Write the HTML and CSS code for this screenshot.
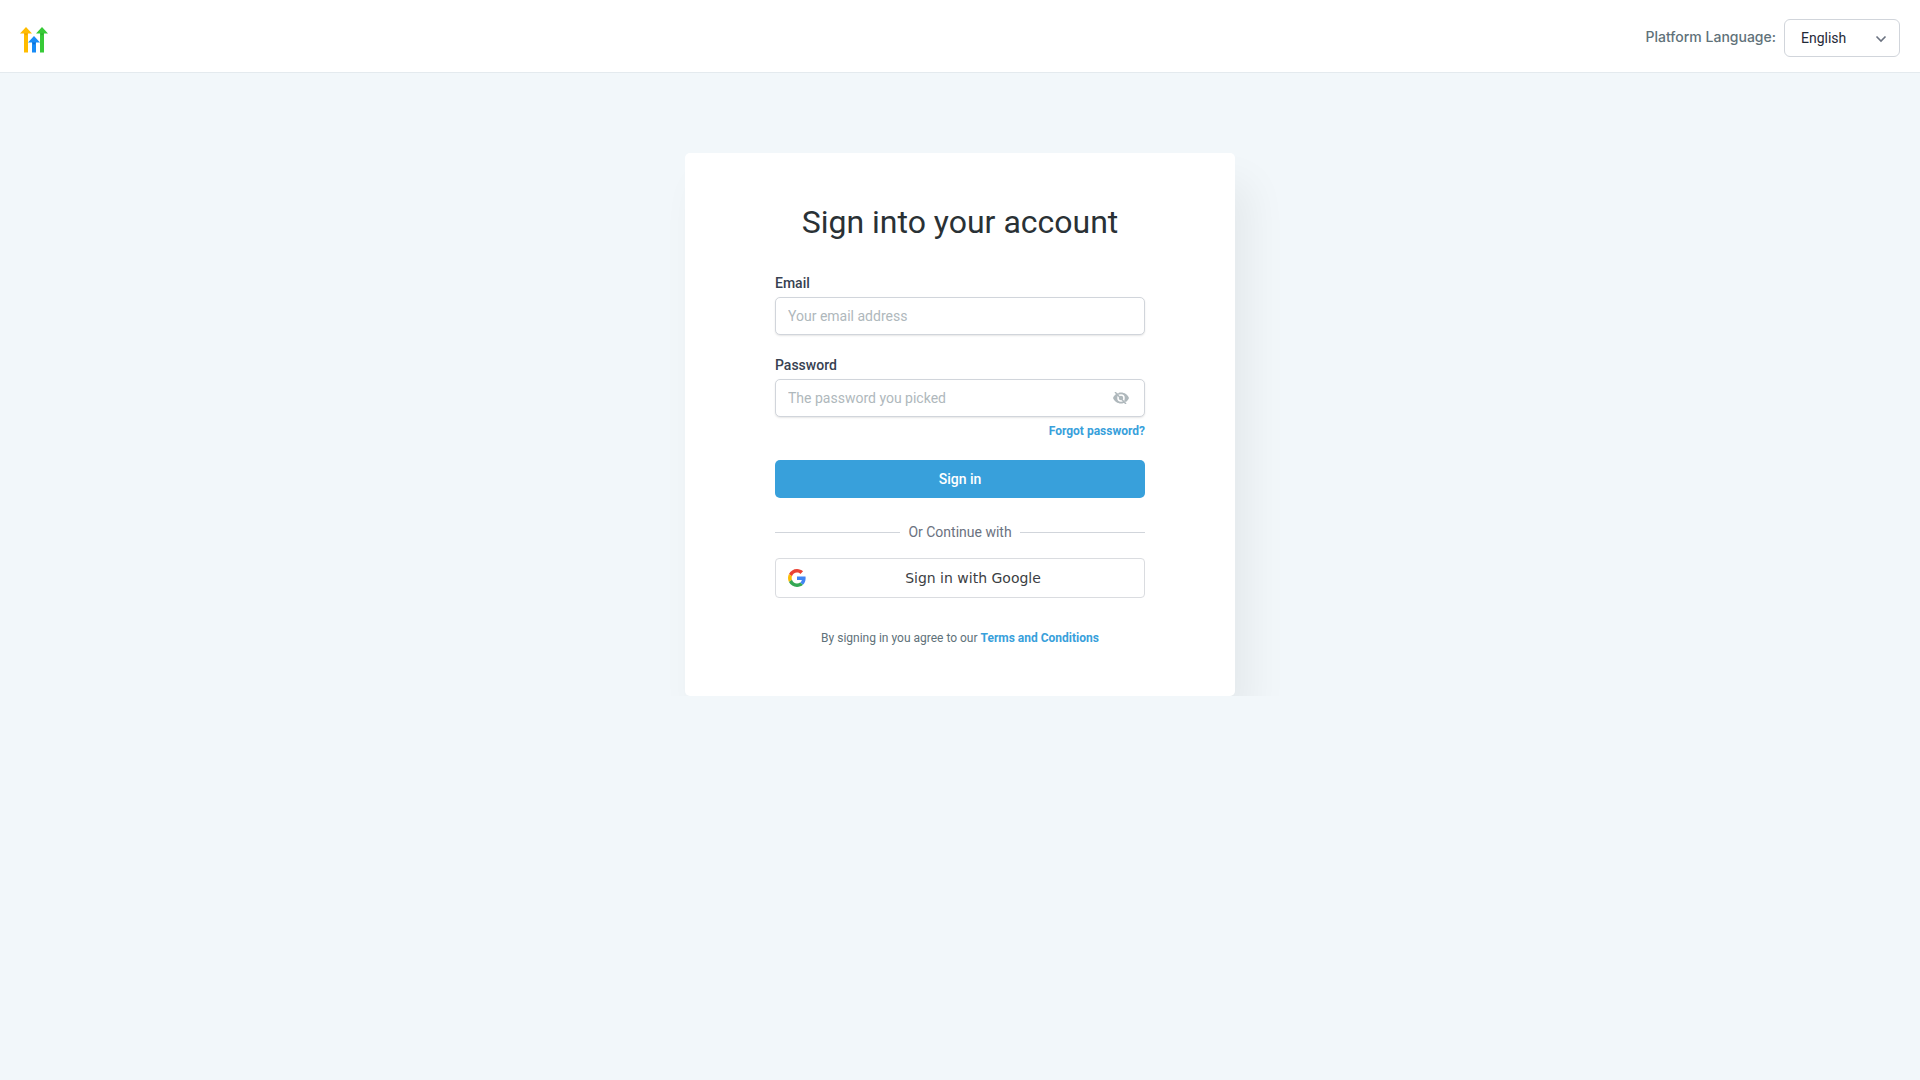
FILE: index.html
```html
<!DOCTYPE html>
<html lang="en">
<head>
  <meta charset="UTF-8">
  <meta name="viewport" content="width=device-width, initial-scale=1">
  <title>Sign in</title>
  <link rel="stylesheet" href="styles.css">
</head>
<body>
<header class="topbar">
  <a href="#" class="logo" aria-label="Home">
    <svg width="28" height="26" viewBox="0 0 28 26">
      <path d="M6 0 L12 6.5 H8 V25.5 H4 V6.5 H0 Z" fill="#ffbc00"/>
      <path d="M22 0 L28 6.5 H24 V25.5 H20 V6.5 H16 Z" fill="#37ca37"/>
      <path d="M14 9 L20 15.5 H16 V25.5 H12 V15.5 H8 Z" fill="#188bf6"/>
      <path d="M4 6.5 H8 L6 8.5 Z" fill="#f0a000"/>
      <path d="M20 6.5 H24 L22 8.5 Z" fill="#2bb02b"/>
      <path d="M12 15.5 H16 L14 18 Z" fill="#0b6fd0"/>
    </svg>
  </a>
  <div class="language">
    <label for="language">Platform Language:</label>
    <div class="select-wrap">
      <select id="language">
        <option>English</option>
      </select>
      <svg class="chevron" width="12" height="8" viewBox="0 0 12 8">
        <path d="M1.5 1.5 L6 6 L10.5 1.5" fill="none" stroke="#6b7280" stroke-width="1.6"/>
      </svg>
    </div>
  </div>
</header>

<main class="page">
  <form class="card">
    <h1>Sign into your account</h1>

    <div class="field">
      <label for="email">Email</label>
      <input type="email" id="email" placeholder="Your email address">
    </div>

    <div class="field">
      <label for="password">Password</label>
      <div class="password-wrap">
        <input type="password" id="password" placeholder="The password you picked">
        <button type="button" class="toggle" aria-label="Show password">
          <svg width="16" height="12" viewBox="0 0 16 12">
            <path d="M8 0.5 C4.4 0.5 1.4 2.7 0 6 C1.4 9.3 4.4 11.5 8 11.5 C11.6 11.5 14.6 9.3 16 6 C14.6 2.7 11.6 0.5 8 0.5 Z" fill="#afb8bc"/>
            <circle cx="8" cy="6" r="3" fill="none" stroke="#fff" stroke-width="1.5"/>
            <path d="M4 0.5 L6 2.7 M10.5 8 L13.5 11.3" stroke="#fff" stroke-width="0.6"/>
            <path d="M2 0 L13 12" stroke="#afb8bc" stroke-width="1.4"/>
          </svg>
        </button>
      </div>
    </div>
    <a href="#" class="forgot">Forgot password?</a>

    <button type="submit" class="btn-primary">Sign in</button>

    <div class="divider">Or Continue with</div>

    <button type="button" class="btn-google">
      <svg width="18" height="18" viewBox="0 0 48 48">
        <path fill="#EA4335" d="M24 9.5c3.54 0 6.71 1.22 9.21 3.6l6.85-6.85C35.9 2.38 30.47 0 24 0 14.62 0 6.51 5.38 2.56 13.22l7.98 6.19C12.43 13.72 17.74 9.5 24 9.5z"/>
        <path fill="#4285F4" d="M46.98 24.55c0-1.57-.15-3.09-.38-4.55H24v9.02h12.94c-.58 2.96-2.26 5.48-4.78 7.18l7.73 6c4.51-4.18 7.09-10.36 7.09-17.65z"/>
        <path fill="#FBBC05" d="M10.53 28.59c-.48-1.45-.76-2.99-.76-4.59s.27-3.14.76-4.59l-7.98-6.19C.92 16.46 0 20.12 0 24c0 3.88.92 7.54 2.56 10.78l7.97-6.19z"/>
        <path fill="#34A853" d="M24 48c6.48 0 11.93-2.13 15.89-5.81l-7.73-6c-2.15 1.45-4.92 2.3-8.16 2.3-6.26 0-11.57-4.22-13.47-9.91l-7.98 6.19C6.51 42.62 14.62 48 24 48z"/>
      </svg>
      <span>Sign in with Google</span>
    </button>

    <p class="terms">By signing in you agree to our <a href="#">Terms and Conditions</a></p>
  </form>
</main>
</body>
</html>
```

FILE: styles.css
```css
* {box-sizing: border-box;}
body {margin: 0; min-height: 100vh; background-color: #f2f7fa; font-family: Roboto, "Liberation Sans", sans-serif; font-size: 14px; line-height: 20px; color: #607179;}
a {color: #38a0db; font-weight: 700; text-decoration: none;}
input, select, button {font-family: inherit; font-size: 14px; line-height: 20px;}

/* top bar */
.topbar {display: flex; justify-content: space-between; align-items: center; padding: 19px 20px 13px; background-color: #fff; border-bottom: 1px solid #e4eaee;}
.logo {display: flex; padding-top: 2px;}
.language {display: flex; align-items: center; gap: 8px;}
.language label {font-family: Inter, sans-serif; font-weight: 500; padding-bottom: 4px;}
.select-wrap {position: relative; padding-bottom: 2px;}
.select-wrap select {appearance: none; width: 116px; height: 38px; padding: 0 32px 0 16px; border: 1px solid #d1d5db; border-radius: 6px; background-color: #fff; color: #1f2937;}
.chevron {position: absolute; right: 13px; top: 16px; pointer-events: none;}

/* sign in card */
.page {display: flex; justify-content: center; padding-top: 80px; overflow: hidden;}
.card {display: flex; flex-direction: column; width: 100%; max-width: 550px; padding: 48px 90px; background-color: #fff; border-radius: 5px; box-shadow: 15px 30px 40px rgba(0, 0, 0, 0.06);}
h1 {margin: 0 0 30px; font-size: 32px; line-height: 42px; font-weight: 400; text-align: center; color: #2a3135;}
.field {display: flex; flex-direction: column; gap: 4px; margin-bottom: 20px;}
.field label {font-weight: 500; color: #374151;}
.field input {width: 100%; height: 38px; padding: 8px 12px; border: 1px solid #d1d5db; border-radius: 5px; background-color: #fff; box-shadow: 0 1px 2px rgba(0, 0, 0, 0.1);}
.field input::placeholder {color: #afb8bc;}
.password-wrap {position: relative;}
.toggle {position: absolute; right: 16px; top: 13px; display: flex; padding: 0; border: 0; background: none;}
.forgot {align-self: flex-end; margin: -16px 0 19px; font-size: 12px;}
.btn-primary {height: 38px; border: 0; border-radius: 5px; background-color: #38a0db; color: #fff; font-weight: 500;}
.divider {display: flex; align-items: center; gap: 8px; margin: 24px 0 16px; color: #6b7280;}
.divider::before, .divider::after {content: ""; flex: 1; height: 1px; background-color: #d1d5db;}
.btn-google {display: flex; align-items: center; height: 40px; padding: 0 12px; border: 1px solid #dadce0; border-radius: 4px; background-color: #fff; color: #3c4043; font-family: "DejaVu Sans", sans-serif;}
.btn-google span {flex: 1; padding-left: 8px; text-align: center;}
.terms {margin: 30px 0 0; font-size: 12px; text-align: center;}
```
